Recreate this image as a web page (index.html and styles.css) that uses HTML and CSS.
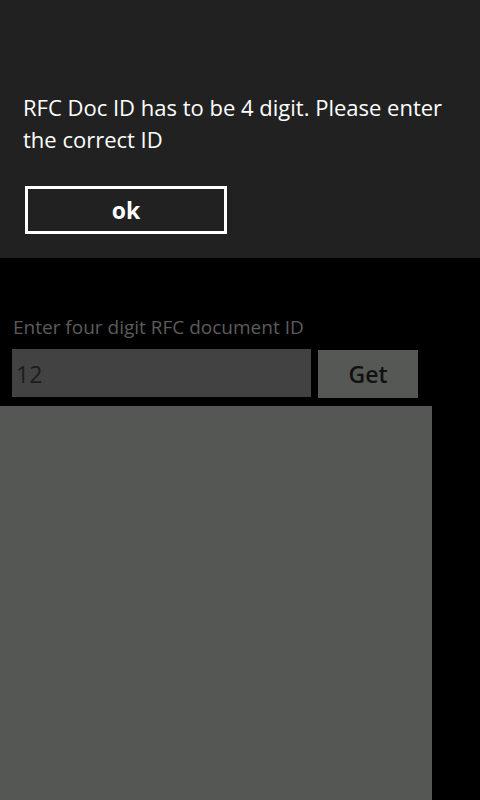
FILE: index.html
```html
<!DOCTYPE html>
<html>
<head>
<meta charset="utf-8">
<link rel="stylesheet" href="styles.css">
</head>
<body>
<div class="page">
  <div class="header"></div>
  <div class="form">
    <div class="label">Enter four digit RFC document ID</div>
    <div class="row">
      <div class="input">12</div>
      <div class="get">Get</div>
    </div>
  </div>
  <div class="panel"></div>
</div>
<div class="dialog">
  <p class="msg">RFC Doc ID has to be 4 digit. Please enter the correct ID</p>
  <div class="ok">ok</div>
</div>
</body>
</html>
```
FILE: styles.css
```css
html, body {
  margin: 0;
  padding: 0;
  background: #000;
  font-family: "Open Sans", "Noto Sans", sans-serif;
  width: 480px;
  height: 800px;
  overflow: hidden;
}
.page {
  display: flex;
  flex-direction: column;
  height: 800px;
}
.header {
  height: 314px;
}
.form {
  padding-left: 12px;
  display: flex;
  flex-direction: column;
}
.label {
  color: #5c5c5c;
  font-size: 19px;
  line-height: 26px;
  margin-left: 1px;
  height: 35px;
}
.row {
  display: flex;
  gap: 7px;
  align-items: flex-start;
}
.input {
  width: 295px;
  height: 48px;
  background: #424242;
  color: #1c1c1c;
  font-size: 23px;
  line-height: 50px;
  padding-left: 4px;
}
.get {
  width: 100px;
  height: 48px;
  margin-top: 1px;
  background: #555855;
  color: #111;
  font-size: 23px;
  font-weight: 600;
  line-height: 48px;
  text-align: center;
}
.panel {
  margin-top: 8px;
  width: 432px;
  flex: 1;
  background: #545753;
}
.dialog {
  position: absolute;
  top: 0;
  left: 0;
  width: 480px;
  height: 258px;
  background: #212121;
  box-sizing: border-box;
  padding: 91px 0 0 23px;
}
.msg {
  margin: 0;
  width: 425px;
  color: #fff;
  font-size: 22px;
  line-height: 32px;
}
.ok {
  margin-top: 31px;
  margin-left: 2px;
  width: 196px;
  height: 42px;
  border: 3px solid #fff;
  color: #fff;
  font-size: 23px;
  font-weight: 700;
  line-height: 42px;
  text-align: center;
}
```
